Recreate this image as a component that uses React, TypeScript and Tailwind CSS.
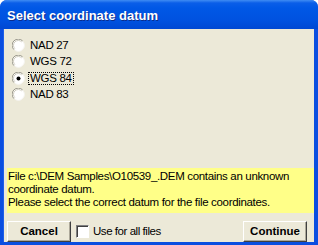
import React from "react"

const datums = ["NAD 27", "WGS 72", "WGS 84", "NAD 83"]

function Radio({ checked }: { checked: boolean }) {
  return (
    <svg width="13" height="13" viewBox="0 0 13 13" className="shrink-0">
      <circle cx="6.5" cy="6.5" r="6" fill="#ffffff" />
      <path d="M1.9 10.6 A6 6 0 0 1 10.6 1.9" fill="none" stroke="#9a988c" strokeWidth="1" />
      <path d="M2.9 9.7 A4.8 4.8 0 0 1 9.7 2.9" fill="none" stroke="#cfccbf" strokeWidth="1" />
      <path d="M11.3 3 A6 6 0 0 1 3 11.3" fill="none" stroke="#f4f3ee" strokeWidth="1" />
      {checked && <circle cx="6.5" cy="6.5" r="2" fill="#000000" />}
    </svg>
  )
}

function Button({ label }: { label: string }) {
  return (
    <button className="w-[64px] h-[21px] bg-[#ece9d8] border-t border-l border-t-white border-l-white border-r border-b border-r-[#404040] border-b-[#404040] shadow-[inset_-1px_-1px_0_#aca899] font-bold text-[11.5px] text-black">
      {label}
    </button>
  )
}

export default function App() {
  return (
    <div
      className="w-[318px] h-[245px] flex flex-col bg-[#0a4ee0] rounded-t-[7px] overflow-hidden"
      style={{ fontFamily: '"Liberation Sans", Arial, sans-serif' }}
    >
      <div className="h-[29px] shrink-0 flex items-center pl-[7px] pt-[2px] bg-[linear-gradient(180deg,#3f8cf3_0px,#0a5ee8_3px,#0058e6_8px,#0052e0_20px,#0048d3_29px)]">
        <span className="text-white font-bold text-[13px] [text-shadow:1px_1px_0_#0b2c8c]">
          Select coordinate datum
        </span>
      </div>
      <div className="flex-1 flex flex-col ml-[3px] mr-[4px] mb-[3px] bg-[#ece9d8] border-l border-[#1f5fe8]">
        <div className="flex flex-col pt-[8px] pl-[8px]">
          {datums.map((d) => (
            <div key={d} className="h-[16.5px] flex items-center text-[11.5px] tracking-[-0.3px] text-black">
              <Radio checked={d === "WGS 84"} />
              <span
                className={
                  d === "WGS 84"
                    ? "ml-[3px] px-[1px] leading-[11px] border border-dotted border-black"
                    : "ml-[4px] px-[1px]"
                }
              >
                {d}
              </span>
            </div>
          ))}
        </div>
        <div className="flex-1" />
        <div className="ml-[3px] mr-[0px] h-[45px] bg-[#ffff88] pt-[2px] px-[1px] text-[11.5px] tracking-[-0.33px] leading-[13px] text-black">
          <div>File c:\DEM Samples\O10539_.DEM contains an unknown</div>
          <div>coordinate datum.</div>
          <div>Please select the correct datum for the file coordinates.</div>
        </div>
        <div className="flex items-center mt-[8px] ml-[3px] mr-[7px] h-[21px]">
          <Button label="Cancel" />
          <div className="ml-[5px] w-[13px] h-[13px] bg-white border-t border-l border-t-[#808080] border-l-[#808080] border-b border-r border-b-white border-r-white shadow-[inset_1px_1px_0_#404040]" />
          <span className="ml-[4px] text-[11.5px] tracking-[-0.45px] text-black">Use for all files</span>
          <div className="flex-1" />
          <Button label="Continue" />
        </div>
      </div>
    </div>
  )
}
